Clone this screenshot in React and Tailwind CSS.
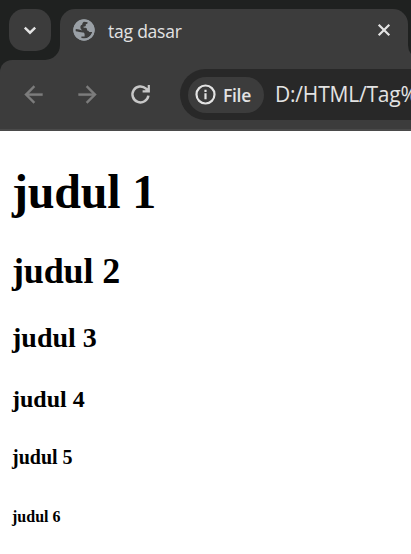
function GlobeIcon() {
  return (
    <svg className="h-[22px] w-[22px] shrink-0" viewBox="0 0 22 22">
      <circle cx="11" cy="11" r="10.7" fill="#9aa0a6" />
      <path
        fill="#3c3c3c"
        d="M11 2.4C12.4 2.4 13.8 2.6 15 3.2C14.6 4.4 14 5 12.8 5.2V6.6C12.8 7.2 12.2 7.6 11.4 7.6H10.6V8.8H12.4C13.4 8.8 14 9.6 14 10.6V11.4C15.2 11.4 16 12 16.2 13H19.4C18.4 16.8 15.2 19.6 11 19.6C10 19.6 9.2 19.4 8.4 19.2V17.4H11.6V15.2C11.6 14.2 10.8 13.6 9.8 13.6C7.4 13.4 5.2 12.4 2.4 12.2C2.3 11.2 2.4 10.6 2.6 10C5 10.2 7.2 11 9.4 11.4C8 10.6 7.4 9.6 7.4 8.2C7.4 6.8 8 6 9.2 5.8C9.2 4.4 9.8 3.2 11 2.4Z"
      />
      <circle cx="11" cy="11" r="9.6" fill="none" stroke="#9aa0a6" strokeWidth="2" />
    </svg>
  );
}

function TabStrip() {
  return (
    <div className="flex h-[60px] bg-[#1f2120]">
      <div className="relative z-10 w-[45px] shrink-0 pl-[9px] pt-[9px]">
        <div className="flex h-[42px] w-[42px] items-center justify-center rounded-[15px] bg-[#3c3c3c]">
          <svg className="h-[14px] w-[14px]" viewBox="0 0 14 14" fill="none" stroke="#e3e3e3" strokeWidth="2.4">
            <path d="M1.8 4.6L7 9.7L12.2 4.6" />
          </svg>
        </div>
      </div>
      <div className="w-[15px] shrink-0 self-end bg-[#3c3c3c]">
        <div className="h-[15px] rounded-br-[15px] bg-[#1f2120]" />
      </div>
      <div className="mt-[9px] flex w-[348px] shrink-0 items-start rounded-t-[15px] bg-[#3c3c3c] pl-[13px] pr-[17px] pt-[10px]">
        <GlobeIcon />
        <span className="ml-[13px] flex-1 whitespace-nowrap font-['Open_Sans','Noto_Sans',sans-serif] text-[17.5px] leading-[25px] tracking-[-0.22px] text-[#e3e3e3]">
          tag dasar
        </span>
        <svg className="mt-[4px] h-[14px] w-[14px]" viewBox="0 0 14 14" fill="none" stroke="#e3e3e3" strokeWidth="2.2">
          <path d="M1.7 1.7L12.3 12.3M12.3 1.7L1.7 12.3" />
        </svg>
      </div>
      <div className="w-[3px] shrink-0 self-end overflow-hidden bg-[#3c3c3c]">
        <div className="h-[15px] w-[15px] rounded-bl-[15px] bg-[#1f2120]" />
      </div>
    </div>
  );
}

function Toolbar() {
  return (
    <div className="bg-[#1f2120]">
      <div className="flex h-[71px] items-start rounded-tl-[12px] border-b-2 border-[#4a4a4a] bg-[#3c3c3c] pl-[20px] pt-[9px]">
        <div className="flex h-[51px] shrink-0 items-center">
          <svg className="h-[27px] w-[27px]" viewBox="0 0 24 24" fill="#7c7c7c" stroke="#7c7c7c" strokeWidth="0.3">
            <path d="M20 11H7.83l5.59-5.59L12 4l-8 8 8 8 1.41-1.41L7.83 13H20v-2z" />
          </svg>
          <svg className="ml-[27px] h-[27px] w-[27px]" viewBox="0 0 24 24" fill="#7c7c7c" stroke="#7c7c7c" strokeWidth="0.3">
            <path d="M12 4l-1.41 1.41L16.17 11H4v2h12.17l-5.58 5.59L12 20l8-8z" />
          </svg>
          <svg className="ml-[26px] h-[27px] w-[27px]" viewBox="0 0 27 27" fill="none" stroke="#c7c7c7" strokeWidth="2.5">
            <path d="M21.4 14.6A8 8 0 1 1 19 7.6L20.5 9.2" />
            <path d="M22.9 4V11.4H15.6V9.2H18.4L20.7 6.8V4Z" fill="#c7c7c7" stroke="none" />
          </svg>
        </div>
        <div className="ml-[26px] flex h-[51px] min-w-0 flex-1 items-center overflow-hidden rounded-l-full bg-[#282828] pl-[8px]">
          <div className="flex h-[36px] w-[76px] shrink-0 items-center rounded-full bg-[#3c3c3c] pl-[7px]">
            <svg className="h-[21px] w-[21px]" viewBox="0 0 21 21" fill="none" stroke="#e3e3e3" strokeWidth="2.2">
              <circle cx="10.5" cy="10.5" r="9" />
              <path d="M10.5 9.3V15.2M10.5 5.7V7.9" />
            </svg>
            <span className="ml-[7px] font-['Open_Sans','Noto_Sans',sans-serif] text-[17.5px] font-semibold leading-[24px] tracking-[-0.3px] text-[#e3e3e3]">
              File
            </span>
          </div>
          <span className="mb-px ml-[11px] whitespace-nowrap font-['Open_Sans','Noto_Sans',sans-serif] text-[21px] leading-[28px] tracking-[-0.2px] text-[#e3e3e3]">
            D:/HTML/Tag%
          </span>
        </div>
      </div>
    </div>
  );
}

export default function App() {
  return (
    <div className="h-[554px] w-[411px] overflow-hidden bg-white">
      <TabStrip />
      <Toolbar />
      <main className="px-[12px] font-['Liberation_Serif',serif] font-bold text-black">
        <h1 className="mt-[33px] text-[48px] leading-[56px] tracking-[-0.2px]">judul 1</h1>
        <h2 className="mt-[31px] text-[36px] leading-[41px] tracking-[-0.15px]">judul 2</h2>
        <h3 className="mt-[30px] text-[28px] leading-[32px]">judul 3</h3>
        <h4 className="mt-[31px] text-[24px] leading-[28px]">judul 4</h4>
        <h5 className="mt-[33px] text-[20px] leading-[23px]">judul 5</h5>
        <h6 className="mt-[39px] text-[16px] leading-[18px]">judul 6</h6>
      </main>
    </div>
  );
}
